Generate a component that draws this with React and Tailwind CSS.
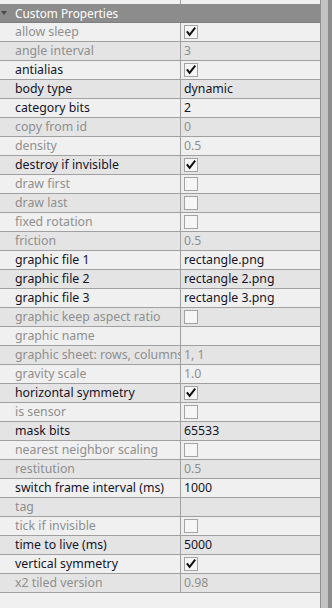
import React from "react";

const rows = [
  { name: "allow sleep", check: true, on: false },
  { name: "angle interval", value: "3", on: false },
  { name: "antialias", check: true, on: true },
  { name: "body type", value: "dynamic", on: true },
  { name: "category bits", value: "2", on: true },
  { name: "copy from id", value: "0", on: false },
  { name: "density", value: "0.5", on: false },
  { name: "destroy if invisible", check: true, on: true },
  { name: "draw first", check: false, on: false },
  { name: "draw last", check: false, on: false },
  { name: "fixed rotation", check: false, on: false },
  { name: "friction", value: "0.5", on: false },
  { name: "graphic file 1", value: "rectangle.png", on: true },
  { name: "graphic file 2", value: "rectangle 2.png", on: true },
  { name: "graphic file 3", value: "rectangle 3.png", on: true },
  { name: "graphic keep aspect ratio", check: false, on: false },
  { name: "graphic name", value: "", on: false },
  { name: "graphic sheet: rows, columns", value: "1, 1", on: false },
  { name: "gravity scale", value: "1.0", on: false },
  { name: "horizontal symmetry", check: true, on: true },
  { name: "is sensor", check: false, on: false },
  { name: "mask bits", value: "65533", on: true },
  { name: "nearest neighbor scaling", check: false, on: false },
  { name: "restitution", value: "0.5", on: false },
  { name: "switch frame interval (ms)", value: "1000", on: true },
  { name: "tag", value: "", on: false },
  { name: "tick if invisible", check: false, on: false },
  { name: "time to live (ms)", value: "5000", on: true },
  { name: "vertical symmetry", check: true, on: true },
  { name: "x2 tiled version", value: "0.98", on: false },
];

function CheckBox({ checked }) {
  return (
    <div className="w-[14px] h-[14px] border border-[#a3a3a3] bg-[#f6f6f6] flex items-center justify-center">
      {checked && (
        <svg width="10" height="10" viewBox="0 0 10 10">
          <path d="M1.5 5.2 L3.6 7.8 L8.6 1.4" fill="none" stroke="#111" strokeWidth="2" strokeLinecap="square" strokeLinejoin="miter" />
        </svg>
      )}
    </div>
  );
}

export default function App() {
  return (
    <div className="w-[332px] h-[608px] flex overflow-hidden bg-[#f0f0f0] text-[12.3px]" style={{ fontFamily: '"Noto Sans", "Open Sans", sans-serif' }}>
      <div className="w-[320px] flex flex-col">
        {/* partial row above the category */}
        <div className="h-[4px] flex bg-[#f0f0f0]">
          <div className="w-[181px] border-r border-[#a0a0a0]" />
        </div>

        {/* category header */}
        <div className="h-[19px] flex items-center bg-[#8c8c8c] border-b border-[#7e7e7e] text-white relative">
          <svg className="absolute left-[1px] top-[7px]" width="6" height="5" viewBox="0 0 6 5">
            <path d="M0 0 L6 0 L3 4 Z" fill="#4a4a4a" />
          </svg>
          <span className="pl-[15px] leading-[18px] text-[11.8px]">Custom Properties</span>
        </div>

        {rows.map((row, i) => (
          <div key={i} className={`h-[19px] flex border-b border-[#a0a0a0] ${i % 2 === 0 ? "bg-[#f0f0f0]" : "bg-[#e4e4e4]"}`}>
            <div className={`w-[181px] pl-[15px] border-r border-[#a0a0a0] flex items-center leading-[18px] whitespace-nowrap overflow-hidden ${row.on ? "text-[#14142a]" : "text-[#8f8f8f]"}`}>
              {row.name}
            </div>
            <div className={`flex-1 pl-[3px] flex items-center leading-[18px] ${row.on ? "text-[#14142a]" : "text-[#8f8f8f]"}`}>
              {row.check !== undefined ? <CheckBox checked={row.check} /> : row.value}
            </div>
          </div>
        ))}
      </div>

      {/* scrollbar / splitter strip */}
      <div className="w-[1px] bg-[#8f8f8f]" />
      <div className="w-[7px] bg-[#c3c3c3]" />
      <div className="w-[4px] bg-[#8d8d8d]" />
    </div>
  );
}
